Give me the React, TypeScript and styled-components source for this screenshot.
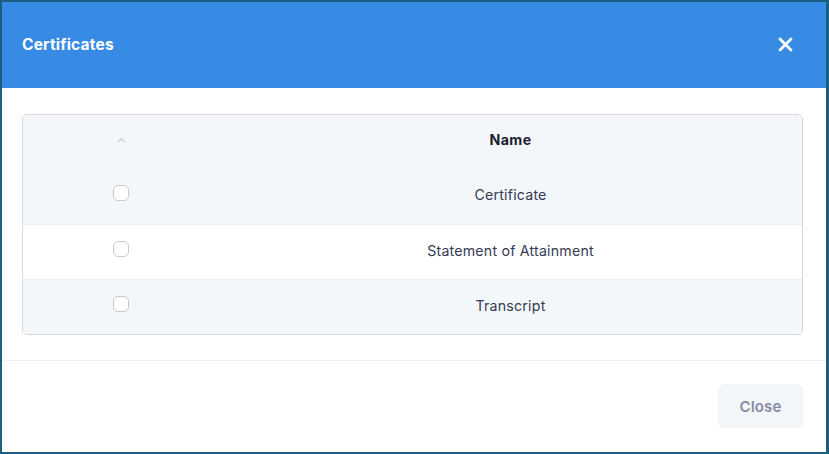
import React from 'react';
import styled, { createGlobalStyle } from 'styled-components';

const GlobalStyle = createGlobalStyle`
  html, body {
    margin: 0;
    padding: 0;
    background: #ffffff;
  }
  * {
    box-sizing: border-box;
  }
`;

const Frame = styled.div`
  width: 829px;
  height: 454px;
  border: 2px solid #1d5d7d;
  border-right-width: 3px;
  display: flex;
  flex-direction: column;
  background: #ffffff;
  font-family: Inter, 'Noto Sans', Arial, sans-serif;
`;

const Header = styled.div`
  height: 86px;
  background: #378be4;
  display: flex;
  align-items: center;
  justify-content: space-between;
  padding: 0 33px 2px 20px;
`;

const Title = styled.h2`
  margin: 0;
  color: #ffffff;
  font-size: 15.5px;
  font-weight: 700;
  letter-spacing: 0.2px;
`;

const CloseIcon = styled.button`
  border: none;
  background: transparent;
  padding: 0;
  width: 16px;
  height: 16px;
  display: flex;
  align-items: center;
  justify-content: center;
  cursor: pointer;
`;

const Body = styled.div`
  padding: 26px 23px 25px 20px;
  border-bottom: 1px solid #eef1f5;
`;

const Table = styled.div`
  border: 1px solid #d6d8dc;
  border-radius: 5px;
  overflow: hidden;
`;

const Row = styled.div<{ $striped?: boolean; $height: number; $line?: boolean }>`
  display: grid;
  grid-template-columns: 196px 1fr;
  align-items: center;
  height: ${({ $height }) => $height}px;
  background: ${({ $striped }) => ($striped ? '#f4f7fa' : '#ffffff')};
  border-top: ${({ $line }) => ($line ? '1px solid #eceff3' : 'none')};
`;

const Cell = styled.div<{ $bold?: boolean }>`
  display: flex;
  justify-content: center;
  align-items: center;
  padding-bottom: ${({ $bold }) => ($bold ? '4px' : '3px')};
  font-size: 14.2px;
  letter-spacing: ${({ $bold }) => ($bold ? '0.4px' : '0.2px')};
  color: ${({ $bold }) => ($bold ? '#1c1e33' : '#363a55')};
  font-weight: ${({ $bold }) => ($bold ? 700 : 400)};
`;

const Checkbox = styled.span`
  width: 16px;
  height: 16px;
  margin-bottom: 3px;
  border: 1.5px solid #c9cad0;
  border-radius: 5px;
  background: #ffffff;
  display: block;
`;

const Footer = styled.div`
  flex: 1;
  display: flex;
  justify-content: flex-end;
  align-items: flex-start;
  padding: 23px 23px 0 0;
`;

const Button = styled.button`
  width: 85px;
  height: 44px;
  border: none;
  border-radius: 6px;
  background: #f3f6f9;
  color: #868ba6;
  font-family: inherit;
  font-size: 15px;
  font-weight: 600;
  letter-spacing: 0.2px;
  cursor: pointer;
`;

const rows = ['Certificate', 'Statement of Attainment', 'Transcript'];

const App: React.FC = () => {
  return (
    <>
      <GlobalStyle />
      <Frame>
        <Header>
          <Title>Certificates</Title>
          <CloseIcon aria-label="close">
            <svg width="15" height="15" viewBox="0 0 15 15">
              <path d="M2 2 L13 13 M13 2 L2 13" stroke="#ffffff" strokeWidth="2.8" strokeLinecap="round" />
            </svg>
          </CloseIcon>
        </Header>
        <Body>
          <Table>
            <Row $striped $height={53}>
              <Cell>
                <svg width="9" height="6" viewBox="0 0 9 6">
                  <path d="M1 5 L4.5 1.5 L8 5" stroke="#c3c6ce" strokeWidth="1.2" fill="none" />
                </svg>
              </Cell>
              <Cell $bold>Name</Cell>
            </Row>
            {rows.map((name, i) => (
              <Row key={name} $striped={i % 2 === 0} $height={i === 0 ? 56 : 55} $line={i > 0}>
                <Cell>
                  <Checkbox />
                </Cell>
                <Cell>{name}</Cell>
              </Row>
            ))}
          </Table>
        </Body>
        <Footer>
          <Button>Close</Button>
        </Footer>
      </Frame>
    </>
  );
};

export default App;
